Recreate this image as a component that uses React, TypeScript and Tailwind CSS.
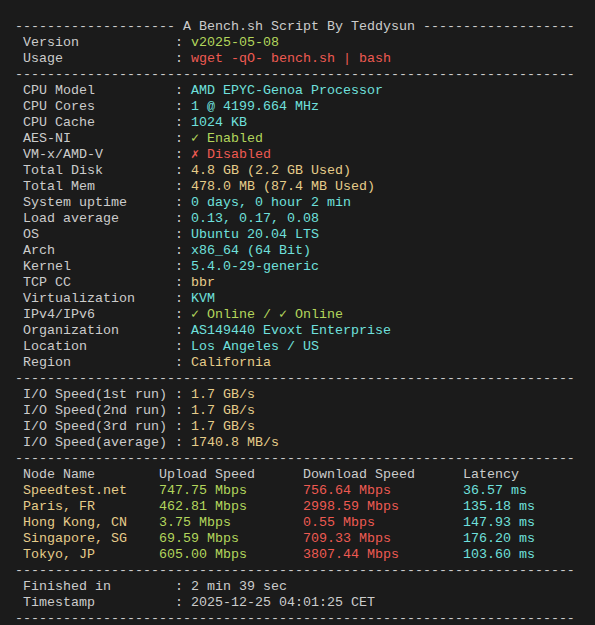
import React from "react";

const GREEN = "text-[#b3d65c]";
const RED = "text-[#ee5a52]";
const CYAN = "text-[#6fe0dd]";
const YELLOW = "text-[#e6cc8a]";

const DASHES = "-".repeat(70);

type Info = { label: string; value: React.ReactNode; color: string };

function Line({ children }: { children?: React.ReactNode }) {
  return <div className="h-4 leading-4 whitespace-pre">{children}</div>;
}

function InfoRow({ label, value, color }: Info) {
  return (
    <Line>
      {" " + label.padEnd(19) + ": "}
      <span className={color}>{value}</span>
    </Line>
  );
}

const system: Info[] = [
  { label: "CPU Model", value: "AMD EPYC-Genoa Processor", color: CYAN },
  { label: "CPU Cores", value: "1 @ 4199.664 MHz", color: CYAN },
  { label: "CPU Cache", value: "1024 KB", color: CYAN },
  { label: "AES-NI", value: "✓ Enabled", color: GREEN },
  { label: "VM-x/AMD-V", value: "✗ Disabled", color: RED },
  { label: "Total Disk", value: "4.8 GB (2.2 GB Used)", color: YELLOW },
  { label: "Total Mem", value: "478.0 MB (87.4 MB Used)", color: YELLOW },
  { label: "System uptime", value: "0 days, 0 hour 2 min", color: CYAN },
  { label: "Load average", value: "0.13, 0.17, 0.08", color: CYAN },
  { label: "OS", value: "Ubuntu 20.04 LTS", color: CYAN },
  { label: "Arch", value: "x86_64 (64 Bit)", color: CYAN },
  { label: "Kernel", value: "5.4.0-29-generic", color: CYAN },
  { label: "TCP CC", value: "bbr", color: YELLOW },
  { label: "Virtualization", value: "KVM", color: CYAN },
  { label: "IPv4/IPv6", value: "✓ Online / ✓ Online", color: GREEN },
  { label: "Organization", value: "AS149440 Evoxt Enterprise", color: CYAN },
  { label: "Location", value: "Los Angeles / US", color: CYAN },
  { label: "Region", value: "California", color: YELLOW },
];

const io: Info[] = [
  { label: "I/O Speed(1st run)", value: "1.7 GB/s", color: YELLOW },
  { label: "I/O Speed(2nd run)", value: "1.7 GB/s", color: YELLOW },
  { label: "I/O Speed(3rd run)", value: "1.7 GB/s", color: YELLOW },
  { label: "I/O Speed(average)", value: "1740.8 MB/s", color: YELLOW },
];

const nodes = [
  ["Speedtest.net", "747.75 Mbps", "756.64 Mbps", "36.57 ms"],
  ["Paris, FR", "462.81 Mbps", "2998.59 Mbps", "135.18 ms"],
  ["Hong Kong, CN", "3.75 Mbps", "0.55 Mbps", "147.93 ms"],
  ["Singapore, SG", "69.59 Mbps", "709.33 Mbps", "176.20 ms"],
  ["Tokyo, JP", "605.00 Mbps", "3807.44 Mbps", "103.60 ms"],
];

export default function App() {
  return (
    <div
      className="w-[595px] h-[625px] bg-[#1b1b1b] text-[#cccccc] pl-[15px] pt-[19px] text-[13.33px] overflow-hidden"
      style={{ fontFamily: '"Liberation Mono", "DejaVu Sans Mono", monospace' }}
    >
      <Line>{"-".repeat(20) + " A Bench.sh Script By Teddysun " + "-".repeat(19)}</Line>
      <InfoRow label="Version" value="v2025-05-08" color={GREEN} />
      <InfoRow label="Usage" value="wget -qO- bench.sh | bash" color={RED} />
      <Line>{DASHES}</Line>

      {system.map((r) => (
        <InfoRow key={r.label} {...r} />
      ))}
      <Line>{DASHES}</Line>

      {io.map((r) => (
        <InfoRow key={r.label} {...r} />
      ))}
      <Line>{DASHES}</Line>

      {/* speedtest table */}
      <Line>{" " + "Node Name".padEnd(17) + "Upload Speed".padEnd(18) + "Download Speed".padEnd(20) + "Latency"}</Line>
      {nodes.map(([name, up, down, lat]) => (
        <Line key={name}>
          {" "}
          <span className={YELLOW}>{name.padEnd(17)}</span>
          <span className={GREEN}>{up.padEnd(18)}</span>
          <span className={RED}>{down.padEnd(20)}</span>
          <span className={CYAN}>{lat}</span>
        </Line>
      ))}
      <Line>{DASHES}</Line>

      <Line>{" " + "Finished in".padEnd(19) + ": 2 min 39 sec"}</Line>
      <Line>{" " + "Timestamp".padEnd(19) + ": 2025-12-25 04:01:25 CET"}</Line>
      <Line>{DASHES}</Line>
    </div>
  );
}
